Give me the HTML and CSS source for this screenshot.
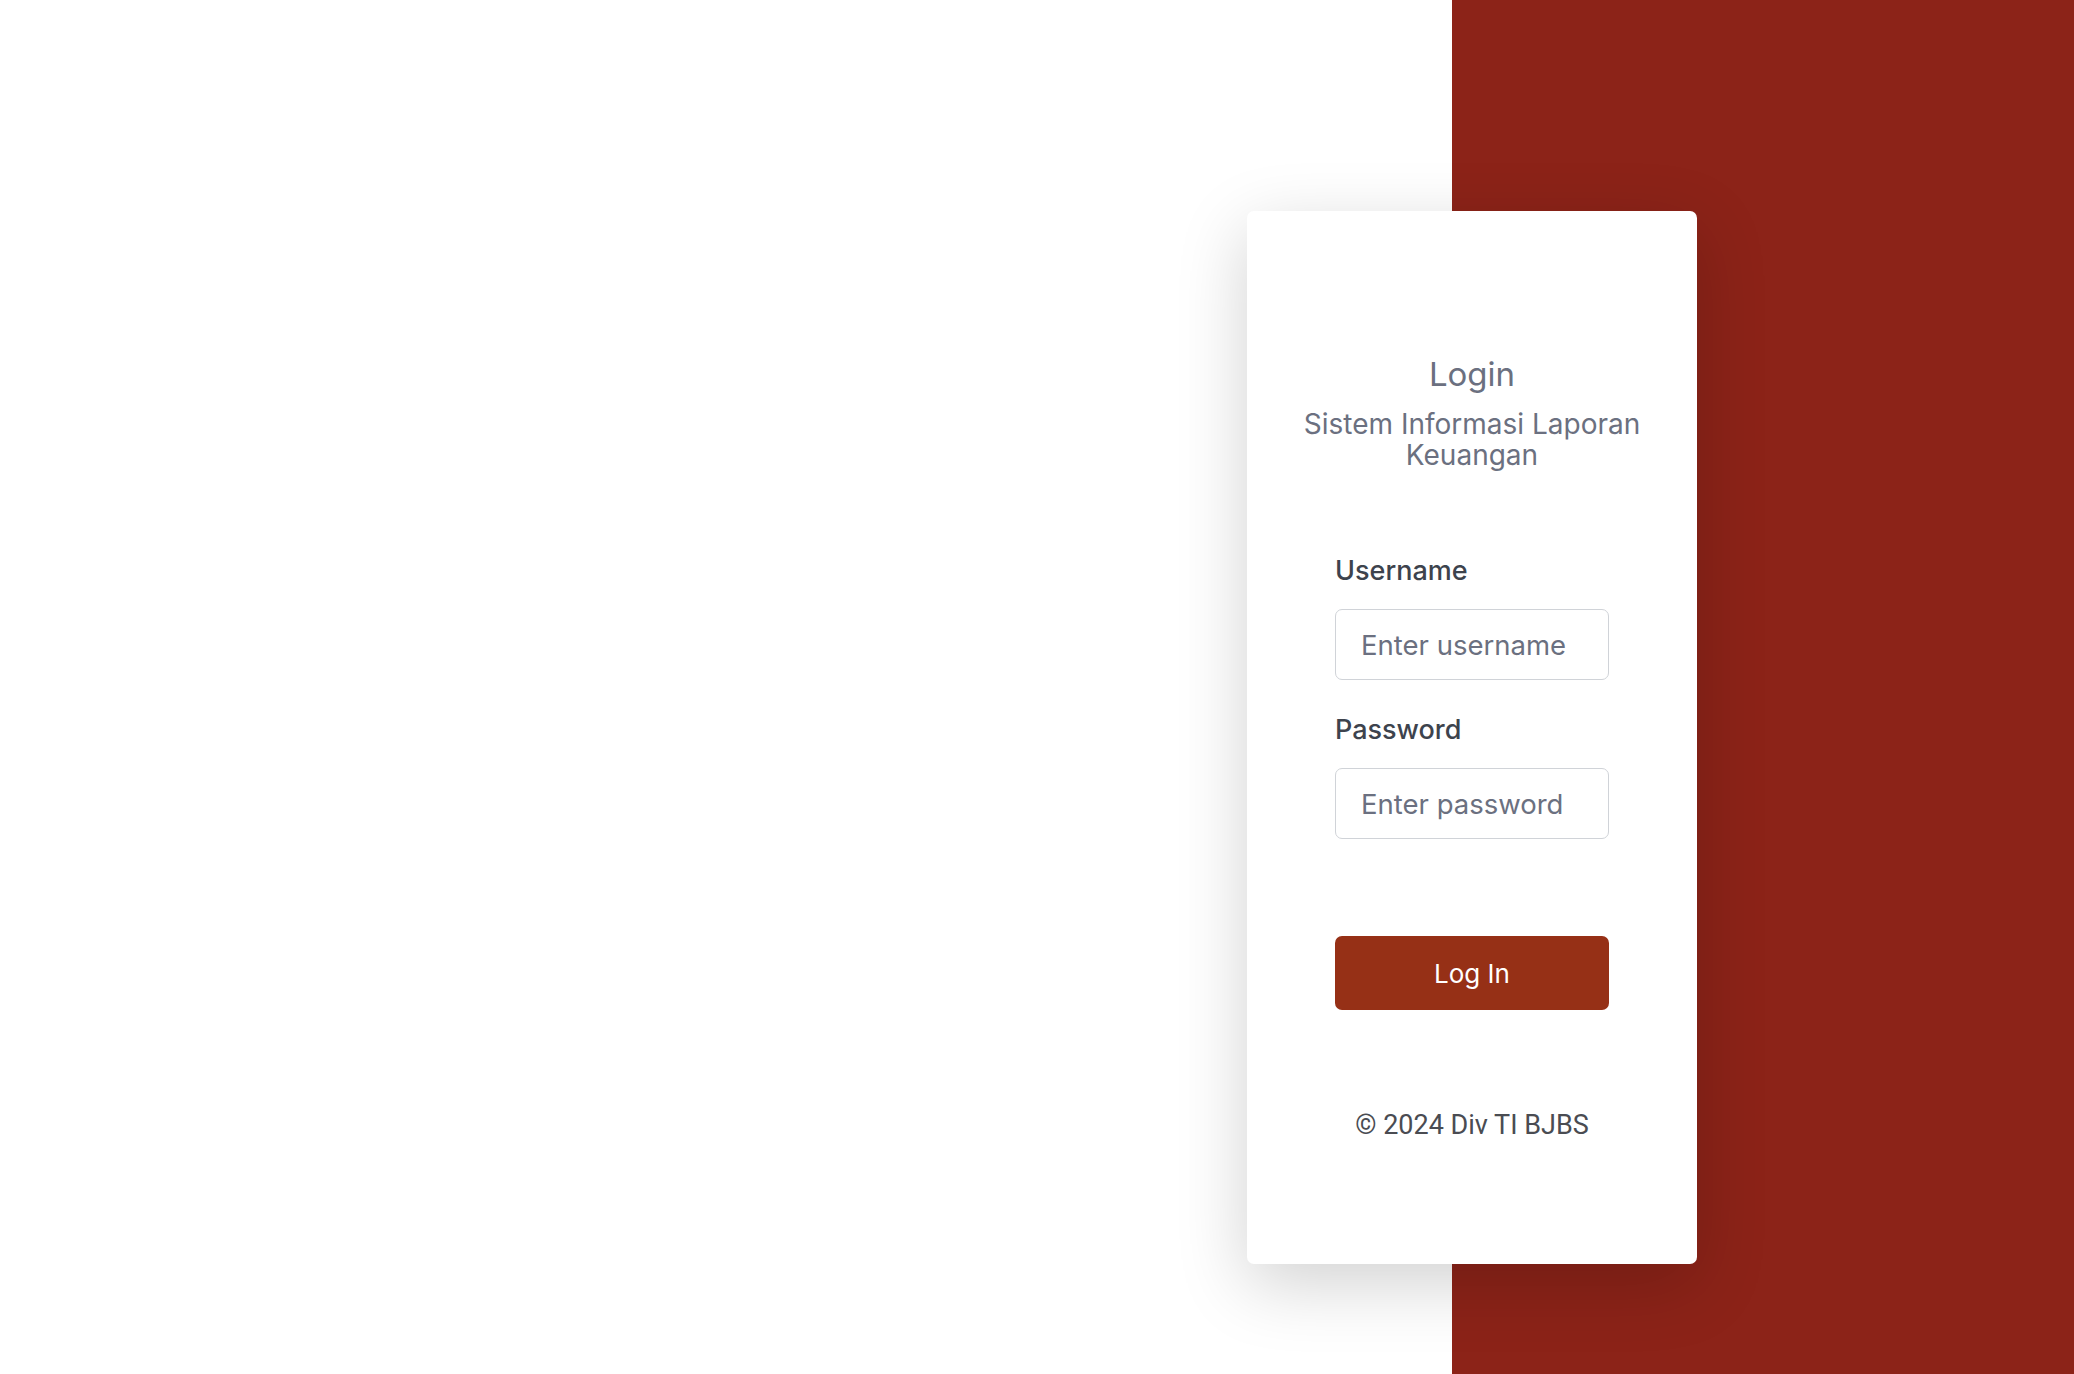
FILE: index.html
```html
<!DOCTYPE html>
<html lang="id">
<head>
<meta charset="utf-8">
<title>Login - Sistem Informasi Laporan Keuangan</title>
<link rel="stylesheet" href="styles.css">
</head>
<body>
<main class="page">
  <section class="card">
    <h1 class="title">Login</h1>
    <p class="subtitle">Sistem Informasi Laporan<br>Keuangan</p>
    <form class="form">
      <label class="label" for="username">Username</label>
      <input class="input" id="username" type="text" placeholder="Enter username">
      <label class="label label-pw" for="password">Password</label>
      <input class="input" id="password" type="password" placeholder="Enter password">
      <button class="btn" type="button">Log In</button>
    </form>
    <p class="footer">© 2024 Div TI BJBS</p>
  </section>
</main>
</body>
</html>
```

FILE: styles.css
```css
html, body {
  margin: 0;
  padding: 0;
  height: 100%;
}
body {
  background: linear-gradient(90deg, #ffffff 0, #ffffff 1452px, #8c2318 1452px, #8c2318 100%);
  font-family: "Inter", "Open Sans", sans-serif;
  overflow: hidden;
}
.page {
  padding: 211px 0 0 1247px;
  box-sizing: border-box;
  height: 100%;
}
.card {
  width: 450px;
  height: 1053px;
  box-sizing: border-box;
  background: #ffffff;
  border-radius: 7px;
  box-shadow: 0 20px 70px rgba(0, 0, 0, 0.18);
  padding: 143px 30px 0 30px;
  display: flex;
  flex-direction: column;
}
.title {
  margin: 0;
  font-size: 33px;
  line-height: 40px;
  font-weight: 400;
  color: #6b7080;
  text-align: center;
}
.subtitle {
  margin: 15px 0 0 0;
  font-size: 28px;
  line-height: 31px;
  font-weight: 400;
  color: #6b7080;
  text-align: center;
}
.form {
  display: flex;
  flex-direction: column;
  margin: 84px 58px 0 58px;
}
.label {
  font-size: 27px;
  line-height: 32px;
  font-weight: 500;
  color: #3d434d;
}
.label-pw {
  margin-top: 34px;
}
.input {
  margin-top: 22px;
  height: 71px;
  box-sizing: border-box;
  border: 1.5px solid #d0d3d8;
  border-radius: 7px;
  padding: 0 25px;
  font-family: "Inter", "Open Sans", sans-serif;
  font-size: 27.5px;
  color: #3d434d;
  background: #fff;
  outline: none;
}
.input::placeholder {
  color: #6b7080;
}
.btn {
  margin-top: 97px;
  height: 74px;
  border: none;
  border-radius: 7px;
  background: #963016;
  color: #ffffff;
  font-family: "Inter", "Open Sans", sans-serif;
  font-size: 26px;
  font-weight: 400;
  cursor: pointer;
}
.footer {
  margin: 99px 0 0 0;
  font-family: "Roboto", sans-serif;
  font-size: 27px;
  line-height: 32px;
  color: #4a4c52;
  text-align: center;
}
```
